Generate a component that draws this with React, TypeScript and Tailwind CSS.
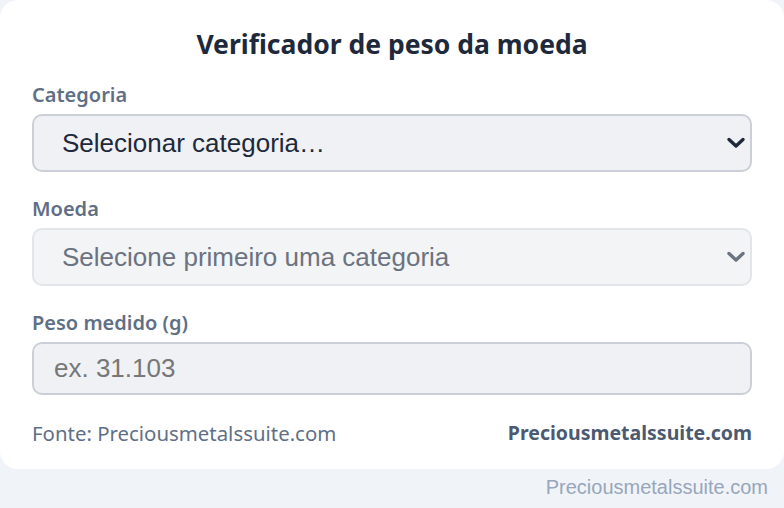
import React from "react";

export default function App() {
  const ui = { fontFamily: '"Noto Sans", "Open Sans", sans-serif' };
  const arial = { fontFamily: '"Liberation Sans", Arial, sans-serif' };
  return (
    <div className="w-[784px] h-[508px] bg-[#f0f3f8] flex flex-col">
      <div className="bg-white rounded-[18px] px-[32px] pt-[28px] pb-[24px] flex flex-col" style={ui}>
        <h1 className="text-center text-[26.5px] leading-[32px] font-bold text-[#1e293b] mb-[23px]">
          Verificador de peso da moeda
        </h1>
        <label className="text-[20px] leading-[24px] font-semibold text-[#5f6f86] mb-[7px]">Categoria</label>
        <div className="relative mb-[25px]">
          <div
            className="h-[58px] rounded-[10px] border-2 border-[#cbd0d8] bg-[#eff1f4] flex items-center pl-[28px] text-[26px] text-[#1e293b]"
            style={arial}
          >
            Selecionar categoria…
          </div>
          <svg width="20" height="12" viewBox="0 0 20 12" className="pointer-events-none absolute right-[6px] top-[23px]">
            <path d="M3 2.5 L10 9 L17 2.5" fill="none" stroke="#1e293b" strokeWidth="3.4" strokeLinecap="round" strokeLinejoin="round" />
          </svg>
        </div>
        <label className="text-[20px] leading-[24px] font-semibold text-[#5f6f86] mb-[7px]">Moeda</label>
        <div className="relative mb-[25px]">
          <div
            className="h-[58px] rounded-[10px] border-2 border-[#e2e5ea] bg-[#f3f4f6] flex items-center pl-[28px] text-[26px] text-[#6b7280]"
            style={arial}
          >
            Selecione primeiro uma categoria
          </div>
          <svg width="20" height="12" viewBox="0 0 20 12" className="pointer-events-none absolute right-[6px] top-[23px]">
            <path d="M3 2.5 L10 9 L17 2.5" fill="none" stroke="#6b7280" strokeWidth="3.4" strokeLinecap="round" strokeLinejoin="round" />
          </svg>
        </div>
        <label className="text-[20px] leading-[24px] font-semibold text-[#5f6f86] mb-[7px]">Peso medido (g)</label>
        <div
          className="h-[53px] rounded-[10px] border-2 border-[#cbd0d8] bg-[#eff1f4] flex items-center pl-[20px] text-[26px] text-[#777777] mb-[26px]"
          style={arial}
        >
          ex. 31.103
        </div>
        <div className="flex justify-between items-center leading-[24px]">
          <span className="text-[20.4px] text-[#5f6f86]">Fonte: Preciousmetalssuite.com</span>
          <span className="text-[19.5px] font-bold text-[#4b5a70]">Preciousmetalssuite.com</span>
        </div>
      </div>
      <div className="flex justify-end pr-[16px] pt-[6px] text-[20px] leading-[24px] text-[#98a6bb]" style={arial}>
        Preciousmetalssuite.com
      </div>
    </div>
  );
}
